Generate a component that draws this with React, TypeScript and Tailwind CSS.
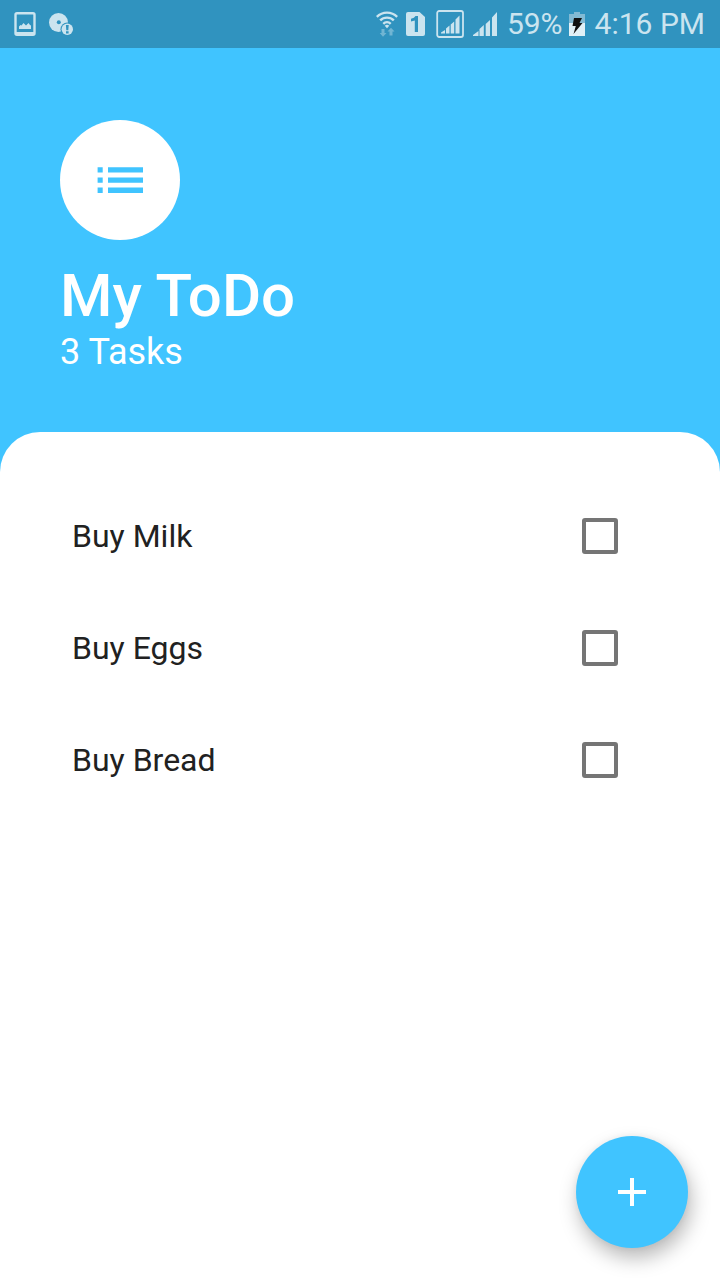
import { useState } from "react";

const initialTasks = [
  { id: "milk", name: "Buy Milk", done: false },
  { id: "eggs", name: "Buy Eggs", done: false },
  { id: "bread", name: "Buy Bread", done: false },
];

function StatusBar() {
  return (
    <div className="flex h-12 shrink-0 items-center justify-between bg-[#3093bf] pr-[15px] pl-3.5 text-[#cbe4ef]">
      <div className="flex items-center gap-3">
        <svg width="22" height="24" viewBox="0 0 22 24" aria-hidden="true">
          <rect x="1.5" y="1.25" width="19" height="21.5" rx="1.5" fill="none" stroke="currentColor" strokeWidth="2.4" />
          <path d="M2 20h18v3H2z" fill="currentColor" />
          <path d="M5 17v-2.5L6.5 13l1 .5L9.5 11l2.5 2.5L14.5 11l1.5 2 1 .5V17z" fill="currentColor" />
        </svg>
        <svg width="26" height="24" viewBox="0 0 26 24" aria-hidden="true">
          <circle cx="10.5" cy="10.5" r="9.5" fill="currentColor" />
          <circle cx="10.8" cy="10.3" r="2" fill="#3093bf" />
          <circle cx="19.3" cy="17.3" r="6.8" fill="#3093bf" />
          <circle cx="19.3" cy="17.3" r="5.7" fill="currentColor" />
          <path d="M17.900 13h2.800l-.4 5.300h-2zM18 19.200h2.600v2.200H18z" fill="#3093bf" />
        </svg>
      </div>
      <div className="flex items-center">
        <svg width="22" height="26" viewBox="0 0 22 26" aria-hidden="true">
          <g fill="none" stroke="currentColor" strokeWidth="2.4">
            <path d="M.8 5.800a14.500 14.500 0 0 1 20.400 0" />
            <path d="M4.200 9.400a9.700 9.700 0 0 1 13.600 0" />
            <path d="M7.300 12.800a5.300 5.300 0 0 1 7.400 0" />
          </g>
          <path d="M8.700 14.700q2.300-1.700 4.600 0L11 17.300z" fill="currentColor" />
          <path d="M5.500 18h3v4H10.500L7 25.800 3.700 22h1.800zM13.500 24.500v-4h-2l3.500-3.700 3.500 3.700h-2v4z" fill="#70b5d3" />
        </svg>
        <svg className="ml-2" width="20" height="24" viewBox="0 0 20 24" aria-hidden="true">
          <path d="M2 0h11.500L19 5v17a2 2 0 0 1-2 2H2a2 2 0 0 1-2-2V2a2 2 0 0 1 2-2z" fill="currentColor" />
          <path d="M9.500 4H12v16H8.800V8.500L5 9.500V6.800Q8.500 6.300 9.500 4z" fill="#3093bf" />
        </svg>
        <svg className="ml-2.5" width="28" height="28" viewBox="0 0 28 28" aria-hidden="true">
          <rect x="1.200" y="1" width="25.800" height="26" rx="2" fill="none" stroke="currentColor" strokeWidth="1.8" />
          <path d="M5 23.500v-1l4-2.500v3.500zM10 23.500v-5l3.500-3v8zM14.700 23.500v-9l3.500-3v12zM19.500 23.500V9.500L23.500 5.500v18z" fill="currentColor" />
        </svg>
        <svg className="ml-2" width="26" height="24" viewBox="0 0 26 24" aria-hidden="true">
          <path d="M1 24v-1l5.500-4v5zM7.500 24v-7l4.300-4v11zM13.700 24V12l4.300-4v16zM20 24V5.500L25 0v24z" fill="currentColor" />
        </svg>
        <span className="ml-[9px] text-[30px] leading-9">59%</span>
        <svg className="ml-1.5" width="16" height="24" viewBox="0 0 16 24" aria-hidden="true">
          <path d="M0 2h5V0h6v2h5v9H0z" fill="#82bad4" />
          <path d="M0 11h16v13H0z" fill="#e0f0f7" />
          <path d="M5 6h8l-2.500 5H13.500L4.500 22l2.300-8H3.500z" fill="#111" />
        </svg>
        <span className="ml-2.5 text-[30px] leading-9">4:16 PM</span>
      </div>
    </div>
  );
}

export default function App() {
  const [tasks, setTasks] = useState(initialTasks);

  const toggle = (id: string) =>
    setTasks((all) => all.map((task) => (task.id === id ? { ...task, done: !task.done } : task)));

  return (
    <div className="flex min-h-screen flex-col bg-[#40c4ff] font-[Roboto,sans-serif]">
      <StatusBar />
      <header className="px-15 pt-18 pb-[59px] text-white">
        <div className="flex size-30 items-center justify-center rounded-full bg-white">
          <svg width="46" height="26" viewBox="0 0 46 26" fill="#40c4ff" aria-hidden="true">
            <path d="M.6 .2h5.100v5.300H.6zM11 .2h35v5.300H11zM.6 10.400h5.100v5.300H.6zM11 10.400h35v5.300H11zM.6 20.600h5.100v5.300H.6zM11 20.600h35v5.300H11z" />
          </svg>
        </div>
        <h1 className="mt-[21px] text-[60px] leading-[70px] font-medium">My ToDo</h1>
        <p className="text-4xl leading-[42px]">{tasks.length} Tasks</p>
      </header>
      <main className="grow rounded-t-[40px] bg-white px-10 pt-12">
        <ul>
          {tasks.map((task) => (
            <li key={task.id}>
              <label className="flex h-28 items-center justify-between pr-[62px] pl-8 text-[32px] text-[#212121]">
                <span className={task.done ? "line-through" : ""}>{task.name}</span>
                <input
                  type="checkbox"
                  checked={task.done}
                  onChange={() => toggle(task.id)}
                  className="size-9 appearance-none rounded-[3px] border-4 border-[#757575] checked:border-[#40c4ff] checked:bg-[#40c4ff]"
                />
              </label>
            </li>
          ))}
        </ul>
      </main>
      <button
        type="button"
        aria-label="Add task"
        className="fixed right-8 bottom-8 flex size-28 items-center justify-center rounded-full bg-[#40c4ff] shadow-[3px_10px_20px_rgba(0,0,0,0.28),0_0_8px_rgba(0,0,0,0.06)]"
      >
        <svg width="28" height="28" viewBox="0 0 28 28" fill="white" aria-hidden="true">
          <path d="M12 0h4v12h12v4H16v12h-4V16H0v-4h12z" />
        </svg>
      </button>
    </div>
  );
}
